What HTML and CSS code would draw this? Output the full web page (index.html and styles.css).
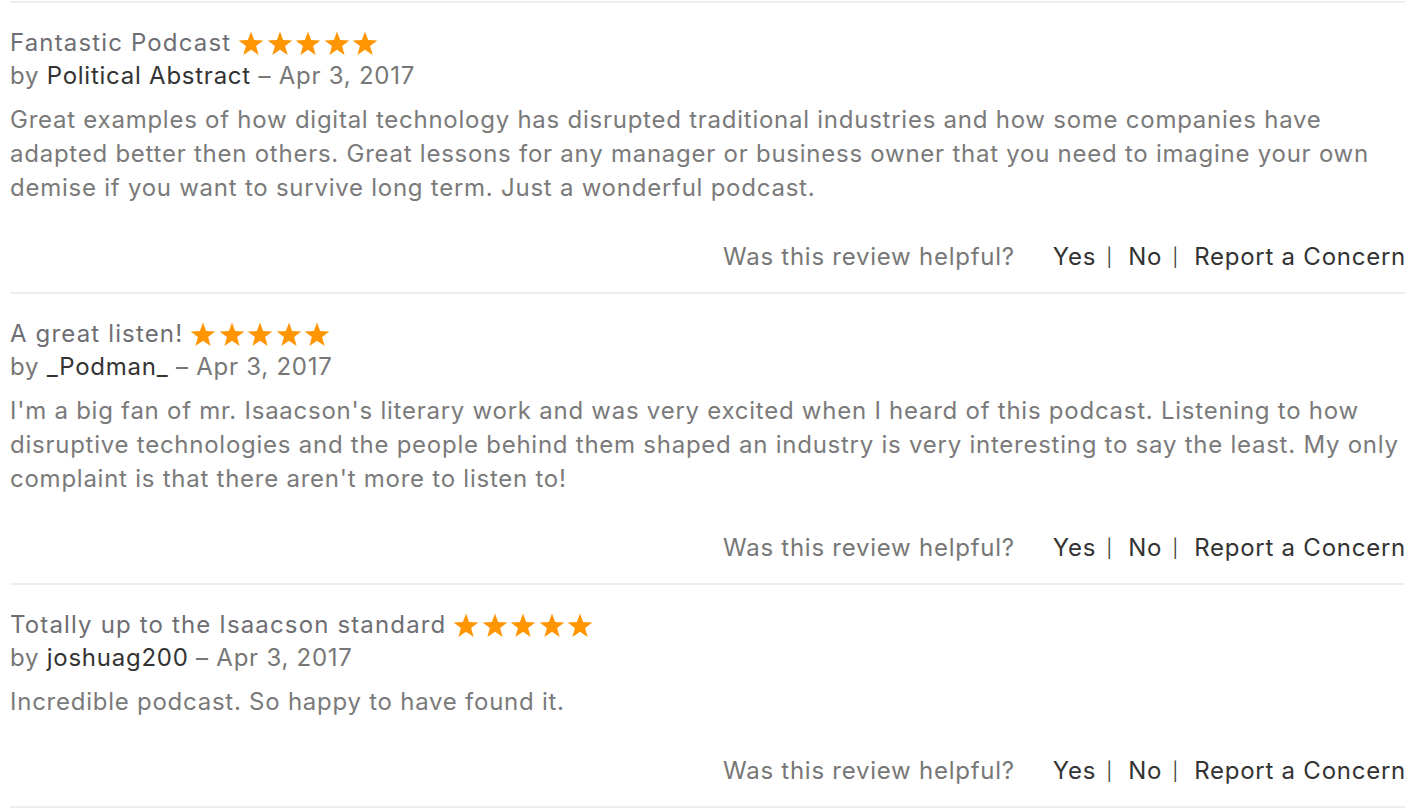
FILE: index.html
```html
<!DOCTYPE html>
<html lang="en">
<head>
<meta charset="utf-8">
<title>Reviews</title>
<link rel="stylesheet" href="styles.css">
</head>
<body>
<svg width="0" height="0" class="defs" aria-hidden="true">
  <defs>
    <symbol id="star" viewBox="0 0 26 25">
      <path d="M13 0.5 L16.1 9.1 L25.3 9.4 L18.1 15 L20.6 23.9 L13 18.7 L5.4 23.9 L7.9 15 L0.7 9.4 L9.9 9.1 Z" fill="#ff9500"/>
    </symbol>
  </defs>
</svg>
<main class="reviews">
  <article class="review">
    <div class="title">Fantastic Podcast <span class="stars"><svg class="star"><use href="#star"/></svg><svg class="star"><use href="#star"/></svg><svg class="star"><use href="#star"/></svg><svg class="star"><use href="#star"/></svg><svg class="star"><use href="#star"/></svg></span></div>
    <div class="byline">by <span class="author">Political Abstract</span> – Apr 3, 2017</div>
    <p class="body">Great examples of how digital technology has disrupted traditional industries and how some companies have adapted better then others. Great lessons for any manager or business owner that you need to imagine your own demise if you want to survive long term. Just a wonderful podcast.</p>
    <div class="actions"><span class="question">Was this review helpful?</span><span class="links">Yes<span class="sep">|</span>No<span class="sep">|</span>Report a Concern</span></div>
  </article>
  <article class="review">
    <div class="title">A great listen! <span class="stars"><svg class="star"><use href="#star"/></svg><svg class="star"><use href="#star"/></svg><svg class="star"><use href="#star"/></svg><svg class="star"><use href="#star"/></svg><svg class="star"><use href="#star"/></svg></span></div>
    <div class="byline">by <span class="author">_Podman_</span> – Apr 3, 2017</div>
    <p class="body">I'm a big fan of mr. Isaacson's literary work and was very excited when I heard of this podcast. Listening to how disruptive technologies and the people behind them shaped an industry is very interesting to say the least. My only complaint is that there aren't more to listen to!</p>
    <div class="actions"><span class="question">Was this review helpful?</span><span class="links">Yes<span class="sep">|</span>No<span class="sep">|</span>Report a Concern</span></div>
  </article>
  <article class="review">
    <div class="title">Totally up to the Isaacson standard <span class="stars"><svg class="star"><use href="#star"/></svg><svg class="star"><use href="#star"/></svg><svg class="star"><use href="#star"/></svg><svg class="star"><use href="#star"/></svg><svg class="star"><use href="#star"/></svg></span></div>
    <div class="byline">by <span class="author">joshuag200</span> – Apr 3, 2017</div>
    <p class="body">Incredible podcast. So happy to have found it.</p>
    <div class="actions"><span class="question">Was this review helpful?</span><span class="links">Yes<span class="sep">|</span>No<span class="sep">|</span>Report a Concern</span></div>
  </article>
</main>
</body>
</html>
```

FILE: styles.css
```css
html, body {
  margin: 0;
  padding: 0;
  background: #ffffff;
}
body {
  font-family: Inter, "Noto Sans", "Liberation Sans", sans-serif;
  font-size: 24px;
  line-height: 34px;
  letter-spacing: 0.75px;
  color: #777;
}
.defs {
  position: absolute;
  width: 0;
  height: 0;
}
.reviews {
  padding: 1px 15px 0 10px;
}
.review {
  border-top: 2px solid #eeeeee;
  padding: 22px 0 18px;
}
.review:last-child {
  border-bottom: 2px solid #eeeeee;
}
.title {
  color: #6e6e73;
  letter-spacing: 1.15px;
  display: flex;
  align-items: center;
  gap: 7px;
  padding-top: 1px;
  margin-bottom: -1px;
}
.stars {
  display: inline-flex;
  gap: 2.5px;
}
.star {
  width: 26px;
  height: 25px;
}
.byline {
  color: #777;
}
.author {
  color: #333;
}
.body {
  margin: 10px 0 0;
  color: #7a7a7a;
}
.actions {
  margin-top: 35px;
  display: flex;
  justify-content: flex-end;
  gap: 38px;
  height: 34px;
}
.question {
  color: #777;
}
.links {
  color: #333;
  white-space: nowrap;
  margin-right: -1px;
}
.sep {
  font-size: 18px;
  line-height: 1;
  letter-spacing: 0;
  color: #444;
  vertical-align: 1px;
  margin: 0 16px 0 10px;
}
```
